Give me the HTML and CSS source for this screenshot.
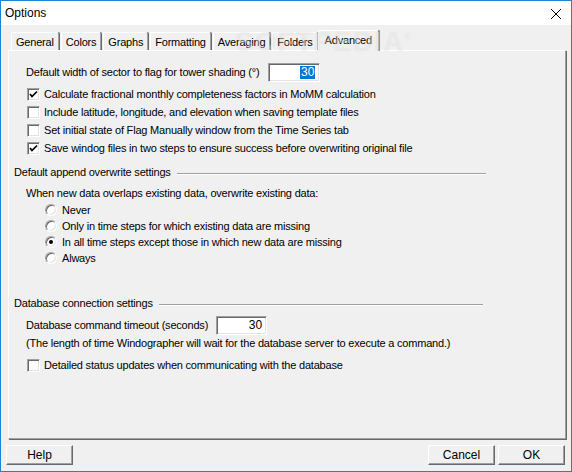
FILE: index.html
```html
<!doctype html>
<html>
	<head>
		<title>Options</title>
		<meta charset="UTF-8">
		<link rel="stylesheet" href="styles.css">
	</head>
	<body>
		<div class="window">
			<div class="titlebar">
				<span class="title">Options</span>
				<svg class="close" width="12" height="12" viewBox="0 0 12 12"><path d="M1 1 L11 11 M11 1 L1 11" stroke="#000" stroke-width="1" fill="none"/></svg>
			</div>
			<div class="client">
				<div class="watermark">SOFTPEDIA<sup>®</sup></div>
				<div class="tabs">
					<span class="tab">General</span>
					<span class="tab">Colors</span>
					<span class="tab">Graphs</span>
					<span class="tab">Formatting</span>
					<span class="tab">Averaging</span>
					<span class="tab">Folders</span>
					<span class="tab active">Advanced</span>
				</div>
				<div class="panel">
					<div class="row field first">
						<span>Default width of sector to flag for tower shading (°)</span>
						<span class="edit w1"><span class="sel">30</span></span>
					</div>
					<div class="row check"><span class="box"><svg width="11" height="11" viewBox="0 0 11 11"><path d="M2 5 L4 7.5 L9 2.5" stroke="#000" stroke-width="1.7" fill="none"/></svg></span>Calculate fractional monthly completeness factors in MoMM calculation</div>
					<div class="row check"><span class="box"></span>Include latitude, longitude, and elevation when saving template files</div>
					<div class="row check"><span class="box"></span>Set initial state of Flag Manually window from the Time Series tab</div>
					<div class="row check"><span class="box"><svg width="11" height="11" viewBox="0 0 11 11"><path d="M2 5 L4 7.5 L9 2.5" stroke="#000" stroke-width="1.7" fill="none"/></svg></span>Save windog files in two steps to ensure success before overwriting original file</div>

					<div class="group g1"><span>Default append overwrite settings</span><span class="line"></span></div>
					<div class="row text">When new data overlaps existing data, overwrite existing data:</div>
					<div class="radios">
						<div class="row radio"><span class="dot"></span>Never</div>
						<div class="row radio"><span class="dot"></span>Only in time steps for which existing data are missing</div>
						<div class="row radio"><span class="dot on"></span>In all time steps except those in which new data are missing</div>
						<div class="row radio"><span class="dot"></span>Always</div>
					</div>

					<div class="group g2"><span>Database connection settings</span><span class="line"></span></div>
					<div class="row field">
						<span>Database command timeout (seconds)</span>
						<span class="edit w2">30</span>
					</div>
					<div class="row text">(The length of time Windographer will wait for the database server to execute a command.)</div>
					<div class="row check last"><span class="box"></span>Detailed status updates when communicating with the database</div>
				</div>
				<div class="buttons">
					<span class="btn">Help</span>
					<span class="spacer"></span>
					<span class="btn">Cancel</span>
					<span class="btn">OK</span>
				</div>
			</div>
		</div>
	</body>
</html>
```

FILE: styles.css
```css
body {
	margin: 0;
	font-family: "Liberation Sans", Arial, sans-serif;
	font-size: 11px;
	letter-spacing: -0.2px;
	color: #000;
}
.window {
	width: 572px;
	height: 472px;
	box-sizing: border-box;
	border: 1px solid #1883d7;
	display: flex;
	flex-direction: column;
	background: #f0f0f0;
}
.titlebar {
	height: 24px;
	background: #fff;
	display: flex;
	align-items: center;
	justify-content: space-between;
	padding: 0 9px 0 4px;
	flex-shrink: 0;
}
.title {
	font-size: 12px;
	letter-spacing: 0;
	margin-top: -1px;
}
.close {
	margin-top: 1px;
}
.client {
	flex: 1;
	display: flex;
	flex-direction: column;
	padding: 5px 3px 0 7px;
	position: relative;
}
.watermark {
	position: absolute;
	left: 234px;
	top: 1px;
	font-size: 28px;
	font-weight: bold;
	letter-spacing: 1px;
	color: rgba(255, 255, 255, 0.35);
	text-shadow: 0 0 1px rgba(0, 0, 0, 0.08);
	pointer-events: none;
	z-index: 5;
}
.watermark sup {
	font-size: 10px;
	font-weight: normal;
}
.tabs {
	display: flex;
	align-items: flex-end;
	height: 20px;
	padding-left: 3px;
}
.tab {
	height: 17px;
	line-height: 18px;
	padding: 0 4px;
	border-left: 1px solid #fff;
	border-top: 1px solid #fff;
	border-right: 1px solid #a0a0a0;
	box-shadow: 1px 0 0 #696969;
	border-radius: 2px 2px 0 0;
	margin-right: 2px;
	background: #f0f0f0;
	white-space: nowrap;
}
.tab.active {
	height: 20px;
	line-height: 18px;
	margin-left: -2px;
	padding: 0 6px;
	margin-bottom: -1px;
	position: relative;
	z-index: 2;
}
.panel {
	height: 387px;
	border-top: 1px solid #fff;
	border-left: 1px solid #fff;
	border-right: 1px solid #a0a0a0;
	border-bottom: 1px solid #a0a0a0;
	box-shadow: 1px 1px 0 #696969;
	margin-right: 2px;
	padding: 0 0 0 5px;
	display: flex;
	flex-direction: column;
}
.row {
	display: flex;
	align-items: center;
	white-space: nowrap;
}
.field {
	height: 20px;
	padding-left: 12px;
}
.field.first {
	margin-top: 11px;
}
.edit {
	height: 19px;
	box-sizing: border-box;
	background: #fff;
	border-top: 1px solid #a0a0a0;
	border-left: 1px solid #a0a0a0;
	border-right: 1px solid #fff;
	border-bottom: 1px solid #fff;
	box-shadow: inset 1px 1px 0 #696969, inset -1px -1px 0 #e3e3e3;
	display: flex;
	align-items: center;
	justify-content: flex-end;
	padding: 0 4px;
	font-size: 12px;
	letter-spacing: 0;
}
.w1 {
	width: 52px;
	margin-left: 9px;
}
.w2 {
	width: 51px;
	margin-left: 8px;
}
.sel {
	background: #0078d7;
	color: #fff;
	padding: 0 1px;
	line-height: 13px;
}
.check {
	height: 18px;
	padding-left: 13px;
}
.check:nth-child(2) {
	margin-top: 3px;
}
.box {
	width: 13px;
	height: 13px;
	box-sizing: border-box;
	background: #fff;
	border-top: 1px solid #a0a0a0;
	border-left: 1px solid #a0a0a0;
	border-right: 1px solid #fff;
	border-bottom: 1px solid #fff;
	box-shadow: inset 1px 1px 0 #696969, inset -1px -1px 0 #e3e3e3;
	margin-right: 4px;
	display: flex;
	align-items: center;
	justify-content: center;
}
.group {
	display: flex;
	align-items: center;
	width: 472px;
	height: 14px;
}
.g1 {
	margin-top: 8px;
}
.g2 {
	margin-top: 30px;
	width: 469px;
}
.line {
	flex: 1;
	height: 1px;
	background: #a0a0a0;
	border-bottom: 1px solid #fff;
	margin-left: 6px;
	margin-top: 3px;
}
.text {
	height: 16px;
	padding-left: 12px;
}
.g1 + .text {
	margin-top: 6px;
}
.radios {
	margin-top: 1px;
}
.radio {
	height: 16px;
	padding-left: 31px;
}
.dot {
	width: 12px;
	height: 12px;
	box-sizing: border-box;
	border-radius: 50%;
	background: #fff;
	border: 1px solid;
	border-color: #a0a0a0 #fff #fff #a0a0a0;
	box-shadow: inset 1px 1px 0 #696969, inset -1px -1px 0 #e3e3e3;
	margin-right: 5px;
	display: flex;
	align-items: center;
	justify-content: center;
}
.dot.on::after {
	content: "";
	width: 4px;
	height: 4px;
	border-radius: 50%;
	background: #000;
}
.g2 + .field {
	margin-top: 5px;
}
.check.last {
	margin-top: 5px;
}
.buttons {
	display: flex;
	padding: 6px 3px 0 0;
	margin-left: -2px;
	gap: 3px;
}
.spacer {
	flex: 1;
}
.btn {
	width: 67px;
	height: 20px;
	box-sizing: border-box;
	border-top: 1px solid #fff;
	border-left: 1px solid #fff;
	border-right: 1px solid #696969;
	border-bottom: 1px solid #696969;
	box-shadow: inset -1px -1px 0 #a0a0a0;
	display: flex;
	align-items: center;
	justify-content: center;
	font-size: 12px;
	letter-spacing: 0;
	background: #f0f0f0;
}
```
